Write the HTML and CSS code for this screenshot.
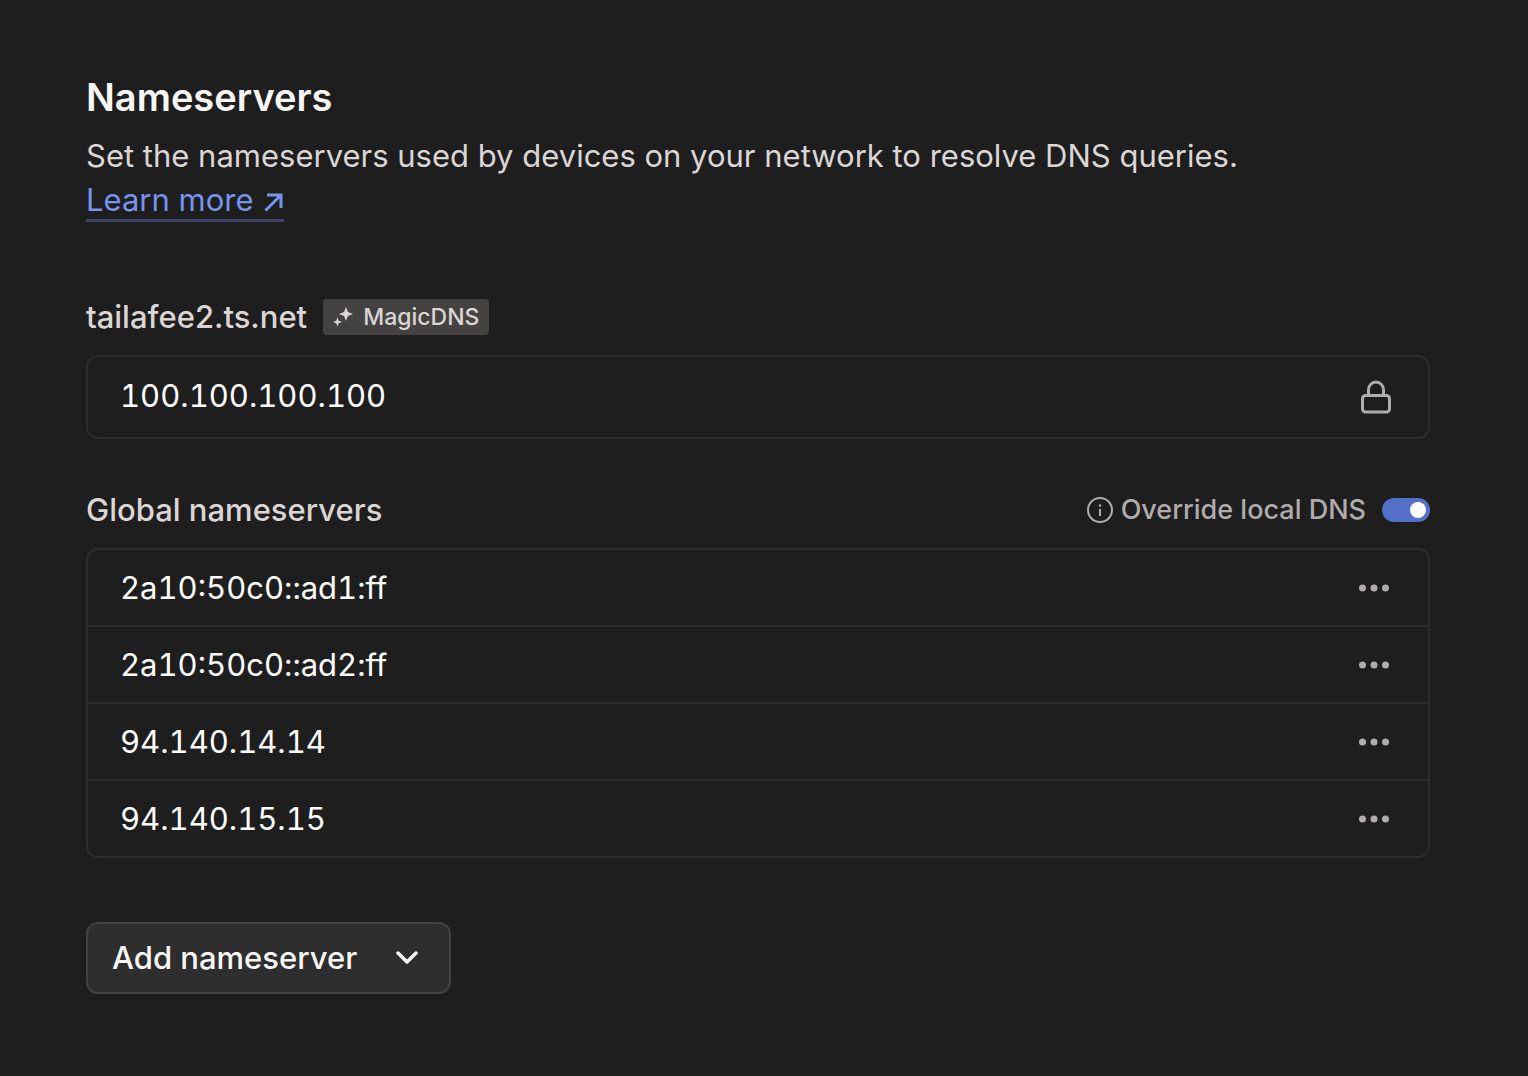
FILE: index.html
```html
<!DOCTYPE html>
<html lang="en">
<head>
  <meta charset="utf-8">
  <meta name="viewport" content="width=device-width, initial-scale=1">
  <title>Nameservers</title>
  <link rel="stylesheet" href="styles.css">
</head>
<body>
  <main class="page">
    <header class="intro">
      <h1 class="title">Nameservers</h1>
      <p class="description">Set the nameservers used by devices on your network to resolve DNS queries.</p>
      <a class="learn-more" href="#learn-more">Learn more
        <svg class="arrow" viewBox="0 0 20 24" aria-hidden="true"><path d="M3 7h14v13M17 7 1.500 22.500"/></svg>
      </a>
    </header>

    <section class="group">
      <div class="group-head">
        <label class="group-title" for="tailnet-resolver">tailafee2.ts.net</label>
        <span class="badge">
          <svg class="sparkles" viewBox="0 0 20 20" aria-hidden="true"><path d="M13 0l1.900 5.100L20 7l-5.100 1.900L13 14l-1.900-5.100L6 7l5.100-1.900zM4.500 10.500l1.200 3.300L9 15l-3.300 1.200-1.200 3.300-1.200-3.300L0 15l3.300-1.200z"/></svg>
          MagicDNS
        </span>
      </div>
      <div class="field">
        <input class="address field-input" id="tailnet-resolver" type="text" value="100.100.100.100" readonly>
        <svg class="lock" viewBox="0 0 32 36" aria-hidden="true"><rect x="2.500" y="16.500" width="27" height="16.500" rx="3"/><path d="M8.500 16v-5.500a7.500 7.500 0 0 1 15 0V16"/></svg>
      </div>
    </section>

    <section class="group">
      <div class="group-head">
        <h2 class="group-title">Global nameservers</h2>
        <div class="override">
          <svg class="info" viewBox="0 0 26 26" aria-hidden="true"><circle class="info-ring" cx="13" cy="13" r="12"/><path class="info-stem" d="M13 12v7"/><circle class="info-dot" cx="13" cy="8.500" r="1.300"/></svg>
          <label class="override-label" for="override-dns">Override local DNS</label>
          <input class="toggle" id="override-dns" type="checkbox" role="switch" checked>
        </div>
      </div>
      <ul class="servers">
        <li class="server">
          <span class="address">2a10:50c0::ad1:ff</span>
          <button class="more" type="button" aria-label="Options for 2a10:50c0::ad1:ff"><svg class="dots" viewBox="0 0 32 8" aria-hidden="true"><circle cx="4.500" cy="4" r="3.500"/><circle cx="16" cy="4" r="3.500"/><circle cx="27.500" cy="4" r="3.500"/></svg></button>
        </li>
        <li class="server">
          <span class="address">2a10:50c0::ad2:ff</span>
          <button class="more" type="button" aria-label="Options for 2a10:50c0::ad2:ff"><svg class="dots" viewBox="0 0 32 8" aria-hidden="true"><circle cx="4.500" cy="4" r="3.500"/><circle cx="16" cy="4" r="3.500"/><circle cx="27.500" cy="4" r="3.500"/></svg></button>
        </li>
        <li class="server">
          <span class="address">94.140.14.14</span>
          <button class="more" type="button" aria-label="Options for 94.140.14.14"><svg class="dots" viewBox="0 0 32 8" aria-hidden="true"><circle cx="4.500" cy="4" r="3.500"/><circle cx="16" cy="4" r="3.500"/><circle cx="27.500" cy="4" r="3.500"/></svg></button>
        </li>
        <li class="server">
          <span class="address">94.140.15.15</span>
          <button class="more" type="button" aria-label="Options for 94.140.15.15"><svg class="dots" viewBox="0 0 32 8" aria-hidden="true"><circle cx="4.500" cy="4" r="3.500"/><circle cx="16" cy="4" r="3.500"/><circle cx="27.500" cy="4" r="3.500"/></svg></button>
        </li>
      </ul>
    </section>

    <button class="add" type="button" aria-haspopup="menu">
      Add nameserver
      <svg class="chevron" viewBox="0 0 24 14" aria-hidden="true"><path d="m3 2 9 9 9-9"/></svg>
    </button>
  </main>
</body>
</html>
```

FILE: styles.css
```css
* {
  box-sizing: border-box;
}

body {
  margin: 0;
  background: #1f1e1e;
  color: #dad6d5;
  font-family: Inter, sans-serif;
  font-size: 31px;
  line-height: 45px;
}

svg {
  flex: none;
  fill: none;
}

button,
input {
  margin: 0;
  font: inherit;
}

.page {
  padding: 73px 98px 72px 86px;
}

.intro {
  display: flex;
  flex-direction: column;
  align-items: flex-start;
}

.title {
  margin: 0 0 12px;
  color: #f9f7f6;
  font-size: 38px;
  font-weight: 600;
  line-height: 48px;
}

.description {
  margin: 0 0 3px;
}

.learn-more {
  display: flex;
  align-items: center;
  gap: 11px;
  border-bottom: 3px solid #3c4566;
  color: #7694ec;
  line-height: 38px;
  text-decoration: none;
}

.arrow {
  width: 20px;
  height: 24px;
  stroke: currentColor;
  stroke-width: 3;
}

.group {
  margin-top: 48px;
}

.intro + .group {
  margin-top: 72px;
}

.group-head {
  display: flex;
  align-items: center;
  gap: 16px;
  margin-bottom: 16px;
}

.group-title {
  margin: 0;
  font-size: 31px;
  font-weight: 500;
}

.badge {
  display: flex;
  align-items: center;
  gap: 10px;
  padding: 0 10px;
  border-radius: 4px;
  background: #444341;
  font-size: 23px;
  font-weight: 500;
  line-height: 36px;
}

.sparkles {
  width: 20px;
  height: 20px;
  fill: currentColor;
}

.address {
  color: #fff;
  font-variant-numeric: tabular-nums;
}

.field {
  display: flex;
  align-items: center;
  padding: 0 36px 0 32px;
  border: 2px solid #2e2d2d;
  border-radius: 12px;
}

.field-input {
  flex: 1;
  min-width: 0;
  height: 80px;
  padding: 0 0 4px;
  border: 0;
  outline: 0;
  background: none;
}

.lock {
  width: 32px;
  height: 36px;
  stroke: #afacab;
  stroke-width: 3;
}

.override {
  display: flex;
  align-items: center;
  gap: 8px;
  margin-left: auto;
  color: #afacab;
}

.info {
  width: 26px;
  height: 26px;
}

.info-ring,
.info-stem {
  stroke: currentColor;
  stroke-width: 2;
}

.info-dot {
  fill: currentColor;
}

.override-label {
  font-size: 27px;
  font-weight: 500;
}

.toggle {
  appearance: none;
  display: flex;
  justify-content: flex-end;
  width: 48px;
  height: 24px;
  margin-left: 8px;
  padding: 4px;
  border-radius: 12px;
  background: #546fc7;
}

.toggle::before {
  width: 16px;
  height: 16px;
  border-radius: 50%;
  background: #fff;
  content: "";
}

.toggle:not(:checked) {
  justify-content: flex-start;
  background: #444341;
}

.servers {
  margin: 0;
  padding: 0;
  border: 2px solid #2e2d2d;
  border-radius: 12px;
  list-style: none;
}

.server {
  display: flex;
  align-items: center;
  justify-content: space-between;
  min-height: 75px;
  padding: 0 30px 0 32px;
}

.server + .server {
  min-height: 77px;
  border-top: 2px solid #2e2d2d;
}

.more {
  display: flex;
  padding: 8px;
  border: 0;
  background: none;
}

.dots {
  width: 32px;
  height: 8px;
  fill: #afacab;
}

.add {
  display: flex;
  align-items: center;
  gap: 38px;
  margin-top: 64px;
  padding: 12px 30px 12px 24px;
  border: 2px solid #444342;
  border-radius: 12px;
  background: #2e2e2e;
  color: #f9f7f6;
  font-weight: 500;
  line-height: 44px;
}

.chevron {
  width: 24px;
  height: 14px;
  stroke: currentColor;
  stroke-width: 3.5;
  stroke-linecap: round;
  stroke-linejoin: round;
}
```
